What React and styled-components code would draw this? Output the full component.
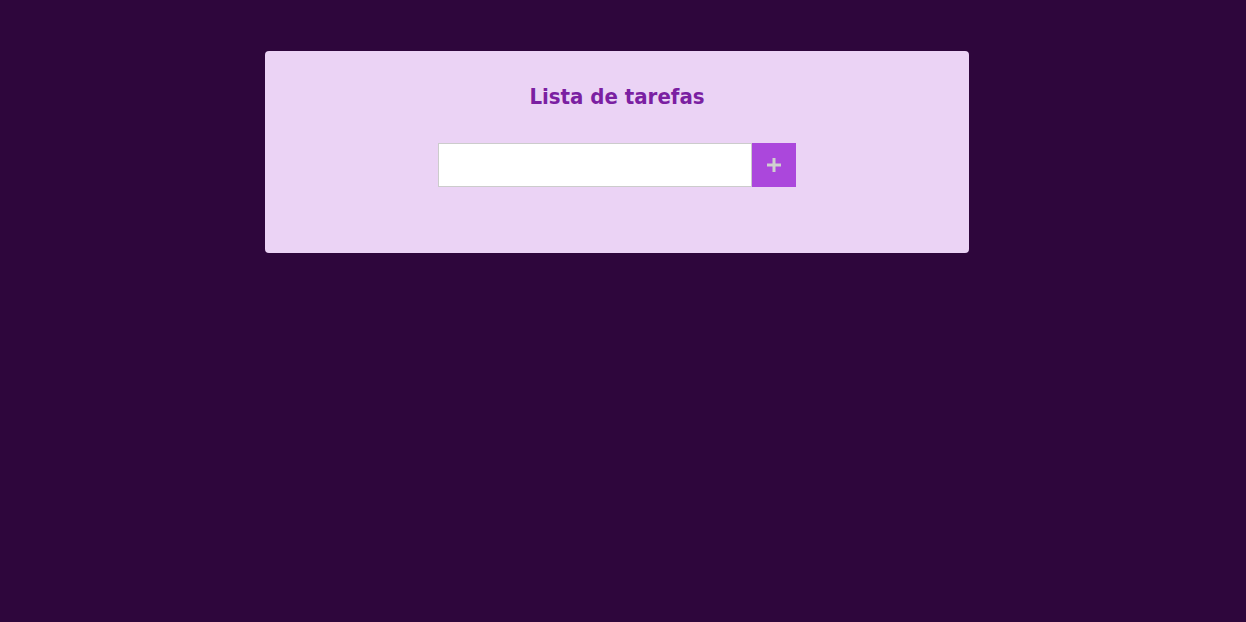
import React, { useState } from "react";
import styled, { createGlobalStyle } from "styled-components";

const GlobalStyle = createGlobalStyle`
  html, body {
    margin: 0;
    padding: 0;
    background: #2e063c;
    font-family: "DejaVu Sans", "Liberation Sans", sans-serif;
  }
  * { box-sizing: border-box; }
`;

const Page = styled.div`
  min-height: 100vh;
  display: flex;
  justify-content: center;
  align-items: flex-start;
  padding: 51px 12px 0 0;
`;

const Card = styled.div`
  width: 704px;
  height: 202px;
  background: #ebd3f5;
  border-radius: 4px;
  display: flex;
  flex-direction: column;
  align-items: center;
  padding-top: 33px;
`;

const Title = styled.h2`
  margin: 0;
  font-family: "DejaVu Sans Condensed", "DejaVu Sans", sans-serif;
  font-stretch: condensed;
  font-size: 22px;
  font-weight: bold;
  color: #7b1fa2;
  line-height: 26px;
`;

const Form = styled.form`
  display: flex;
  margin-top: 33px;
`;

const Input = styled.input`
  width: 314px;
  height: 44px;
  border: 1px solid #cccccc;
  background: #fff;
  padding: 0 10px;
  font-size: 16px;
  outline: none;
`;

const AddButton = styled.button`
  width: 44px;
  height: 44px;
  border: none;
  background: #ab47dc;
  display: flex;
  align-items: center;
  justify-content: center;
  padding: 0;
  cursor: pointer;
`;

const PlusIcon = () => (
  <svg width="14" height="14" viewBox="0 0 14 14">
    <path d="M7 0v14M0 7h14" stroke="#cfcfcf" strokeWidth="3" />
  </svg>
);

export default function App() {
  const [task, setTask] = useState("");

  return (
    <>
      <GlobalStyle />
      <Page>
        <Card>
          <Title>Lista de tarefas</Title>
          <Form onSubmit={(e) => e.preventDefault()}>
            <Input value={task} onChange={(e) => setTask(e.target.value)} />
            <AddButton type="submit" aria-label="Adicionar">
              <PlusIcon />
            </AddButton>
          </Form>
        </Card>
      </Page>
    </>
  );
}
